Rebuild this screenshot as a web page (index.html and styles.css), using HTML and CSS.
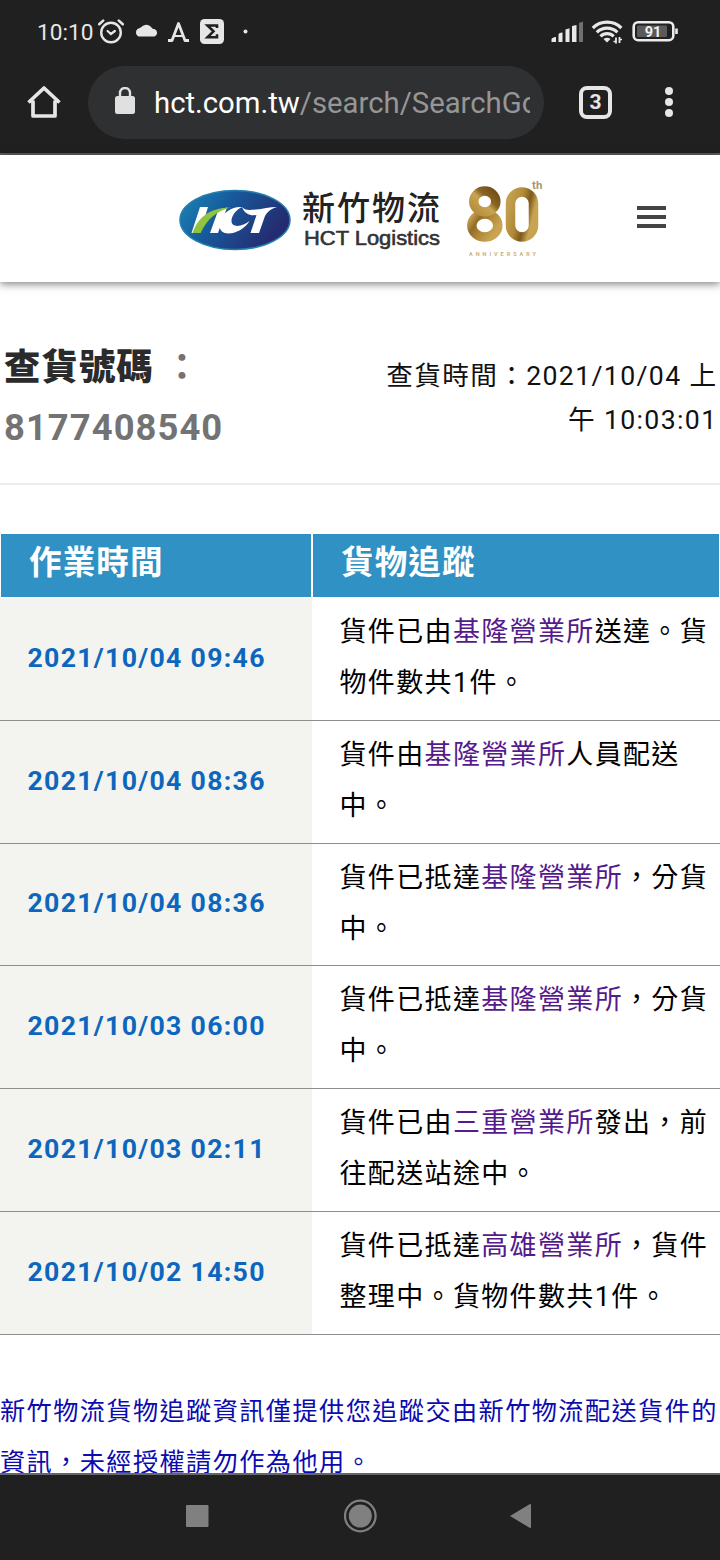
FILE: index.html
```
<!DOCTYPE html>
<html lang="zh-Hant">

<head>

<meta charset="utf-8">
<title>新竹物流 - 查貨</title>

<link rel="stylesheet" href="styles.css">

</head>

<body>

<div class="tela">

<!-- status bar -->
<div class="status">
  <span class="hora">10:10</span>
  <svg class="icones" width="160" height="62" viewBox="0 0 160 62">
    <g fill="none" stroke="#e6e6e6" stroke-linecap="round">
      <circle cx="18" cy="32.5" r="9.8" stroke-width="2.4"/>
      <path d="M14.600 31l3.300 3 4-3" stroke-width="2.2"/>
      <path d="M6.2 24.2l4-3.6M29.8 24.2l-4-3.6" stroke-width="2.6"/>
    </g>
    <path d="M45.500 36.500a4.500 4.500 0 0 1-1-7.500c1.500-1 3-1 4-2 2.500-3 7-3.500 10 .5 1 1 1.500 1.500 3 1.500a4 4 0 0 1 0 7.500z" fill="#e6e6e6"/>
    <path d="M75 40.500h4l6.500-17 6.500 17h4" fill="none" stroke="#e6e6e6" stroke-width="2.800" stroke-linejoin="round"/>
    <path d="M81 36h9" stroke="#e6e6e6" stroke-width="2"/>
    <rect x="107" y="19" width="24" height="25" rx="4.500" fill="#e6e6e6"/>
    <path d="M124 28v-2.500h-9.500l6 5.800-6 6H124v-3" fill="none" stroke="#202020" stroke-width="2.600"/>
    <circle cx="152.500" cy="31.500" r="2" fill="#e6e6e6"/>
  </svg>
  <svg class="sinais" width="130" height="62" viewBox="550 0 130 62">
    <g fill="#e8e8e8">
      <path d="M551.500 42v-2.500q0-2 4.500-2.500v5zM558.500 42v-7.500q0-1.500 4-2V42zM565.500 42V29.500l4-1.200V42zM572 42V26l4.500-1V42z"/>
      <path d="M579 42V23l4-1.500V42z" fill="#707070"/>
      <path d="M607 42.600l-3.500-3.500a5 5 0 0 1 7 0z"/>
    </g>
    <g fill="none" stroke="#e8e8e8" stroke-width="3.200">
      <path d="M592.800 28a20.500 20.500 0 0 1 28.600 0M596.800 32.300a15 15 0 0 1 20.600 0M600.500 36.300a9.500 9.500 0 0 1 13.200 0"/>
    </g>
    <path d="M616 37.500v6M619.500 37v6" stroke="#e8e8e8" stroke-width="1.800"/>
    <path d="M613.500 41.500h2.500M619.500 39.500h2.500" stroke="#e8e8e8" stroke-width="1.500"/>
    <rect x="633.700" y="22.200" width="39.600" height="18" rx="4.500" fill="none" stroke="#ececec" stroke-width="2.600"/>
    <rect x="637" y="25.500" width="30" height="11.500" rx="1" fill="#5a5a5a"/>
    <path d="M676.500 28.500v5.500" stroke="#ececec" stroke-width="2.600"/>
    <text class="bateria" x="653" y="37" text-anchor="middle">91</text>
  </svg>
</div>

<!-- browser toolbar -->
<div class="navegador">
  <svg class="casa" width="36" height="36" viewBox="0 0 36 36">
    <path d="M2.500 18.500L18 4l15.500 14.500M7 16.500V32h22V16.500" fill="none" stroke="#e6e6e6" stroke-width="3.700" stroke-linejoin="round"/>
  </svg>
  <div class="endereco">
    <svg class="cadeado" width="20" height="28" viewBox="0 0 20 28">
      <rect x="0" y="9" width="20" height="18" rx="2.500" fill="#e0e0e0"/>
      <path d="M5 10V6a5 5 0 0 1 10 0v4" fill="none" stroke="#e0e0e0" stroke-width="2.400"/>
    </svg>
    <div class="url">hct.com.tw<span>/search/SearchGo</span></div>
  </div>
  <div class="abas">3</div>
  <svg class="pontos" width="10" height="32" viewBox="0 0 10 32">
    <g fill="#e6e6e6"><circle cx="5" cy="5" r="4"/><circle cx="5" cy="16" r="4"/><circle cx="5" cy="27" r="4"/></g>
  </svg>
</div>

<!-- site header -->
<div class="topo">
  <svg class="logo" width="380" height="126" viewBox="175 155.500 380 126">
    <defs>
      <linearGradient id="azul" x1="0" y1="0" x2="1" y2=".4">
        <stop offset="0" stop-color="#1c87b8"/><stop offset=".45" stop-color="#175a9c"/><stop offset="1" stop-color="#252b70"/>
      </linearGradient>
      <linearGradient id="ouro8" x1="1" y1="0" x2="0" y2="1">
        <stop offset="0" stop-color="#6e4d16"/><stop offset=".35" stop-color="#8a6423"/><stop offset=".55" stop-color="#c8a452"/><stop offset="1" stop-color="#b48d3d"/>
      </linearGradient>
      <linearGradient id="ouro8b" x1="0" y1="0" x2="1" y2=".6">
        <stop offset="0" stop-color="#c8a452"/><stop offset=".3" stop-color="#936c28"/><stop offset=".6" stop-color="#b08838"/><stop offset="1" stop-color="#c8a452"/>
      </linearGradient>
      <linearGradient id="ouro0" x1="0" y1="0" x2="1" y2=".5">
        <stop offset="0" stop-color="#c3a050"/><stop offset=".45" stop-color="#b28b3a"/><stop offset=".75" stop-color="#7d5a1c"/><stop offset="1" stop-color="#c8a452"/>
      </linearGradient>
    </defs>
    <ellipse cx="235" cy="219.500" rx="55" ry="29.500" fill="url(#azul)" stroke="#237fae" stroke-width="1.500"/>
    <!-- the three strokes of the HCT mark -->
    <g fill="#fff">
      <path d="M200 206.500h8l-8 26h-8.500zM218.500 209l8.500-2-9 25.500h-8z"/>
      <path d="M242 206.500c-9-1-19 5-22 14-3 10 4 14 13 12 6-1.500 13-6 16.500-12-7 6-18 7-18 0 0-5 4-11 10.500-14z"/>
      <path d="M242 206.500c4 4 8 3 14 2.500 6-.5 14-2.500 21-2.500-6 2-9.500 4.500-12 9l-6 17h-8.500l6-18c-6 1-12-1-14.500-8z"/>
    </g>
    <path d="M192.500 232.500c5-14 15-25 38-25.500-14 3.500-23 11-30 25.500z" fill="#8fc43c"/>
    <text class="logo-zh" x="302" y="219" textLength="138">新竹物流</text>
    <text class="logo-en" x="304" y="244.500" textLength="136" lengthAdjust="spacingAndGlyphs">HCT Logistics</text>
    <g fill="none" stroke-width="9.500">
      <ellipse cx="484.800" cy="225" rx="13" ry="11.500" stroke="url(#ouro8b)"/>
      <ellipse cx="484.800" cy="201" rx="11" ry="10.500" stroke="url(#ouro8)"/>
      <rect x="510.500" y="191.500" width="23" height="45" rx="11.500" stroke="url(#ouro0)"/>
    </g>
    <text class="logo-th" x="532" y="188">th</text>
    <text class="logo-aniv" x="469" y="255.500" textLength="67">ANNIVERSARY</text>
  </svg>
  <div class="menu"><i></i><i></i><i></i></div>
</div>

<!-- tracking result -->
<div class="resumo">
  <h2 class="codigo"><b>查貨號碼</b> ：<br>8177408540</h2>
  <p class="consulta">查貨時間：2021/10/04 上<br>午 10:03:01</p>
</div>

<div class="tabela">
  <div class="linha cabecalho"><div>作業時間</div><div>貨物追蹤</div></div>
  <div class="linha"><div class="data">2021/10/04 09:46</div><div class="texto">貨件已由<a>基隆營業所</a>送達。貨<br>物件數共1件。</div></div>
  <div class="linha"><div class="data">2021/10/04 08:36</div><div class="texto">貨件由<a>基隆營業所</a>人員配送<br>中。</div></div>
  <div class="linha"><div class="data">2021/10/04 08:36</div><div class="texto">貨件已抵達<a>基隆營業所</a>，分貨<br>中。</div></div>
  <div class="linha"><div class="data">2021/10/03 06:00</div><div class="texto">貨件已抵達<a>基隆營業所</a>，分貨<br>中。</div></div>
  <div class="linha"><div class="data">2021/10/03 02:11</div><div class="texto">貨件已由<a>三重營業所</a>發出，前<br>往配送站途中。</div></div>
  <div class="linha"><div class="data">2021/10/02 14:50</div><div class="texto">貨件已抵達<a>高雄營業所</a>，貨件<br>整理中。貨物件數共1件。</div></div>
</div>

<p class="aviso">新竹物流貨物追蹤資訊僅提供您追蹤交由新竹物流配送貨件的<br>資訊，未經授權請勿作為他用。</p>

<!-- android buttons -->
<div class="botoes">
  <svg width="720" height="84" viewBox="0 2 720 84">
    <g fill="#808080">
      <rect x="186" y="32" width="22.500" height="22" rx="1"/>
      <circle cx="360.300" cy="43" r="11.500"/>
      <path d="M510 43l20-12q1-.5 1 1v22q0 1.500-1 1z"/>
    </g>
    <circle cx="360.300" cy="43" r="15.300" fill="none" stroke="#808080" stroke-width="2.200"/>
  </svg>
</div>

</div>

</body>

</html>
```
FILE: styles.css
```
*{ box-sizing: border-box; margin: 0; padding: 0; }
body{ font-family: Roboto, "Noto Sans CJK TC", sans-serif; background-color: #fff; }
.tela{ display: flex; flex-direction: column; width: 720px; height: 1560px; overflow: hidden; }

.status{ display: flex; align-items: center; flex: none; height: 62px; padding-left: 37px; background-color: #202020; }
.hora{ width: 56px; color: #e6e6e6; font-size: 22.7px; white-space: nowrap; padding-top: 2px; }
.sinais{ margin-left: 297px; }
.bateria{ font-size: 14.5px; font-weight: bold; fill: #f0f0f0; }

.navegador{ display: flex; align-items: center; flex: none; height: 93px; padding: 0 0 11px 26px; background-color: #202020; border-bottom: 2px solid #5c5c5c; }
.endereco{ display: flex; align-items: center; width: 456px; height: 73px; margin-left: 26px; padding-left: 27px; border-radius: 37px; background-color: #2f3032; }
.cadeado{ flex: none; margin-bottom: 2px; }
.url{ width: 376px; margin-left: 19px; padding-top: 2px; overflow: hidden; white-space: nowrap; color: #fff; font-size: 29.3px; line-height: 40px; }
.url span{ color: #969696; }
.abas{ display: flex; align-items: center; justify-content: center; width: 33px; height: 33px; margin-left: 35px; border: 4px solid #e6e6e6; border-radius: 8px; color: #e6e6e6; font-size: 21px; font-weight: bold; }
.pontos{ margin-left: 52px; }

.topo{ display: flex; align-items: center; flex: none; height: 127px; padding-left: 175px; background-color: #fff; box-shadow: 0 2px 8px rgba(0,0,0,.5); }
.logo-zh{ font-size: 33px; font-weight: 500; fill: #222; }
.logo-en{ font-family: "Liberation Sans", sans-serif; font-size: 20px; fill: #333; stroke: #333; stroke-width: .6px; }
.logo-th{ font-size: 11.5px; font-weight: bold; fill: #b3936a; }
.logo-aniv{ font-size: 5.5px; font-weight: bold; fill: #c9b184; }
.menu{ display: flex; flex-direction: column; gap: 5px; margin: 0 0 3px 82px; }
.menu i{ width: 29px; height: 4px; background-color: #444; }

.resumo{ display: flex; justify-content: space-between; flex: none; height: 203px; padding: 56px 2.5px 0 4px; border-bottom: 2px solid #ebebeb; letter-spacing: 1.35px; }
.codigo{ color: #737373; font-size: 36.4px; line-height: 60px; letter-spacing: 1.05px; }
.codigo b{ color: #2b2b2b; }
.consulta{ padding-top: 16px; color: #111; font-size: 26.67px; line-height: 44px; text-align: right; }

.tabela{ flex: none; margin-top: 48px; letter-spacing: 1.35px; }
.linha{ display: grid; grid-template-columns: 312px 408px; height: 122.8px; border-bottom: 1px solid #8e8e8e; }
.cabecalho{ height: 65px; border: 0; color: #fff; font-size: 32.6px; font-weight: bold; line-height: 59px; letter-spacing: 1.1px; }
.cabecalho div{ padding-left: 28px; border: 1px solid #fff; background-color: #2f91c4; }
.data{ display: flex; align-items: center; padding: 0 0 2px 27.5px; background-color: #f3f4ef; color: #0d66be; font-size: 26.67px; font-weight: bold; letter-spacing: 1.3px; }
.texto{ padding: 9px 0 0 27.5px; color: #000; font-size: 27px; line-height: 51px; white-space: nowrap; }
.texto a{ color: #551a8b; }

.aviso{ flex: none; height: 138px; padding-top: 51px; overflow: hidden; color: #0b0bb0; font-size: 25.2px; line-height: 51px; letter-spacing: 1.4px; white-space: nowrap; }
.botoes{ flex: 1; background-color: #202020; border-top: 2px solid #666; }
```
